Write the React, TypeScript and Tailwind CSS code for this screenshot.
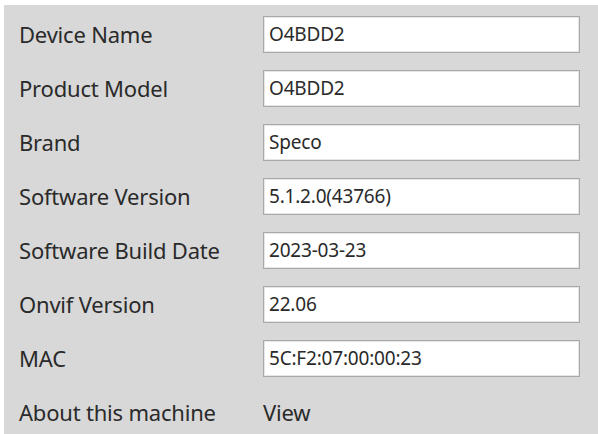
const rows: { label: string; value: string }[] = [
  { label: 'Device Name', value: 'O4BDD2' },
  { label: 'Product Model', value: 'O4BDD2' },
  { label: 'Brand', value: 'Speco' },
  { label: 'Software Version', value: '5.1.2.0(43766)' },
  { label: 'Software Build Date', value: '2023-03-23' },
  { label: 'Onvif Version', value: '22.06' },
  { label: 'MAC', value: '5C:F2:07:00:00:23' },
];

export default function App() {
  return (
    <div className="w-[598px] h-[434px] bg-white pt-[5px] pl-[4px] overflow-hidden">
      <div
        className="h-full bg-[#d8d8d8] pt-[2px] pl-[15px] text-[#2a2a2a]"
        style={{ fontFamily: '"Noto Sans", "Open Sans", sans-serif' }}
      >
        {rows.map((r) => (
          <div key={r.label} className="flex items-center h-[54px]">
            <div className="w-[244px] text-[22px] tracking-[-0.2px]">{r.label}</div>
            <div className="w-[317px] h-[37px] bg-white border border-[#a9a9a9] shadow-[inset_0_0_0_1px_#e6e6e6] flex items-center pl-[5px] text-[19px] tracking-[-0.2px]">
              {r.value}
            </div>
          </div>
        ))}
        <div className="flex items-center h-[54px]">
          <div className="w-[244px] text-[22px] tracking-[-0.2px]">About this machine</div>
          <div className="text-[22px] tracking-[-0.2px]">View</div>
        </div>
      </div>
    </div>
  );
}
